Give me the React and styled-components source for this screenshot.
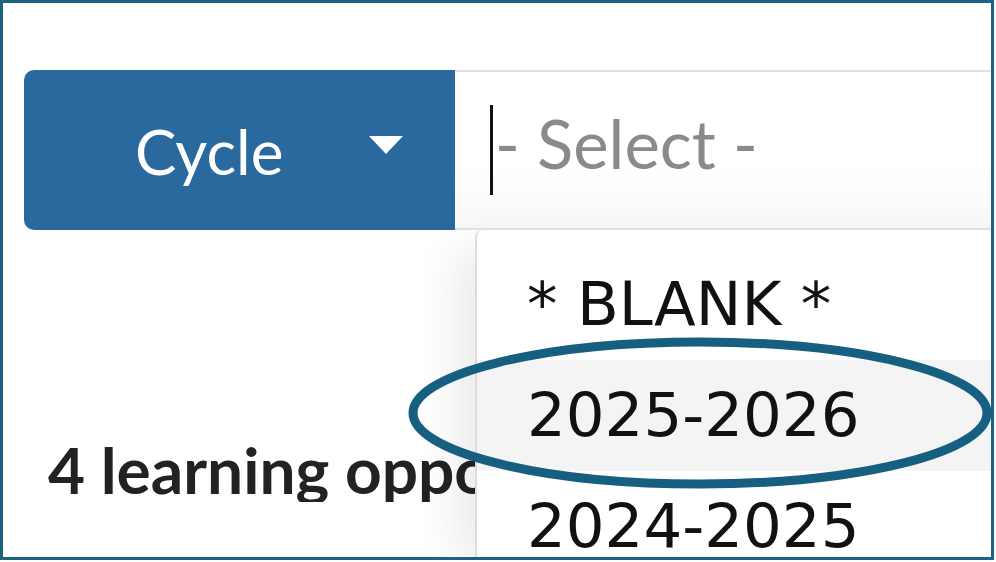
import React from 'react';
import styled, { createGlobalStyle } from 'styled-components';

const GlobalStyle = createGlobalStyle`
    html, body {
        margin: 0;
        padding: 0;
        background: #ffffff;
    }
`

const cycles = ['* BLANK *', '2025-2026', '2024-2025']

const App = () => {
    return (
        <>
            <GlobalStyle />
            <Frame>
                <FilterRow>
                    <CycleButton>
                        <span>Cycle</span>
                        <Caret />
                    </CycleButton>
                    <InputWrap>
                        <Cursor />
                        <Placeholder>- Select -</Placeholder>
                        <Menu>
                            {cycles.map((c) => (
                                <MenuItem key={c} active={c === '2025-2026'}>{c}</MenuItem>
                            ))}
                        </Menu>
                    </InputWrap>
                </FilterRow>
                {/* the open menu covers the rest of this line */}
                <Results>4 learning opportunities</Results>
                <Highlight viewBox="0 0 600 160" aria-hidden="true">
                    <ellipse cx="292" cy="79" rx="287" ry="71" fill="none" stroke="#175f80" strokeWidth="9" />
                </Highlight>
            </Frame>
        </>
    );
}

const Frame = styled.div`
    position: relative;
    box-sizing: border-box;
    width: 994px;
    height: 560px;
    border: 3px solid #1b6283;
    overflow: hidden;
    padding: 67px 0 0 21px;
    background: #fff;
`

const FilterRow = styled.div`
    display: flex;
    height: 160px;
    width: 1100px;
`

const CycleButton = styled.div`
    box-sizing: border-box;
    width: 431px;
    height: 160px;
    flex-shrink: 0;
    display: flex;
    align-items: center;
    justify-content: space-between;
    padding: 0 52px 0 111px;
    background: #2a699e;
    border-radius: 10px 0 0 10px;
    color: #fff;
    font-family: Lato, "Noto Sans", sans-serif;
    font-size: 62px;
    span {
        margin-top: 2px;
    }
`

const Caret = styled.div`
    width: 0;
    height: 0;
    border-left: 17px solid transparent;
    border-right: 17px solid transparent;
    border-top: 18px solid #fff;
    margin-top: -10px;
`

const InputWrap = styled.div`
    position: relative;
    flex: 1;
    box-sizing: border-box;
    display: flex;
    align-items: center;
    padding-left: 35px;
    border-top: 2px solid #e2e2e2;
    border-bottom: 2px solid #e2e2e2;
    background: linear-gradient(to bottom, #fff 60%, #f8f8f8);
`

const Cursor = styled.div`
    width: 3px;
    height: 90px;
    background: #111;
`

const Placeholder = styled.span`
    font-family: Lato, "Noto Sans", sans-serif;
    font-size: 67px;
    color: #8a8a8a;
    margin-left: 2px;
    margin-top: -14px;
`

const Menu = styled.div`
    position: absolute;
    top: calc(100% + 2px);
    left: 20px;
    right: 0;
    padding-top: 19px;
    background: #fff;
    border-left: 2px solid #dcdcdc;
    border-top-left-radius: 8px;
    box-shadow: -40px 0 40px -20px rgba(0, 0, 0, 0.08);
    z-index: 2;
`

const MenuItem = styled.div`
    height: 111px;
    box-sizing: border-box;
    padding: 18px 0 0 50px;
    font-family: "DejaVu Sans", Verdana, sans-serif;
    font-size: 61px;
    line-height: 1.2;
    color: #111;
    background: ${(p) => (p.active ? '#f4f4f4' : 'transparent')};
`

const Results = styled.div`
    width: 430px;
    overflow: hidden;
    margin: 208px 0 0 24px;
    font-family: Lato, "Noto Sans", sans-serif;
    font-weight: 700;
    font-size: 64px;
    line-height: 1;
    color: #222;
    white-space: nowrap;
`

const Highlight = styled.svg`
    position: absolute;
    left: 405px;
    top: 331px;
    width: 600px;
    height: 160px;
    z-index: 3;
    pointer-events: none;
`

export default App;
